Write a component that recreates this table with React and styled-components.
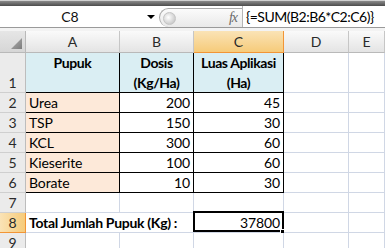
import React from "react";
import styled, { createGlobalStyle } from "styled-components";

const Global = createGlobalStyle`
  html, body {
    margin: 0;
    padding: 0;
    background: #fff;
  }
  body {
    font-family: Lato, "Open Sans", sans-serif;
    font-size: 14px;
    color: #000;
  }
  #root {
    width: 385px;
    height: 248px;
    overflow: hidden;
  }
`;

const Window = styled.div`
  width: 385px;
  height: 248px;
  overflow: hidden;
  display: flex;
  flex-direction: column;
`;

const TopStrip = styled.div`
  height: 6px;
  flex: none;
  background: linear-gradient(#d0d0d0 0, #d0d0d0 1px, #8a8a8a 1px, #4c4c4c 100%);
`;

const FormulaBar = styled.div`
  height: 21px;
  flex: none;
  display: flex;
  border-bottom: 1px solid #9a9a9a;
  background: #fff;
`;

const NameBox = styled.div`
  width: 159px;
  flex: none;
  display: flex;
  align-items: center;
  font-size: 14px;
  color: #111;
`;

const NameText = styled.span`
  width: 140px;
  text-align: center;
`;

const DropArrow = styled.span`
  width: 0;
  height: 0;
  margin-left: 7px;
  border-left: 4px solid transparent;
  border-right: 4px solid transparent;
  border-top: 4px solid #000;
`;

const FxArea = styled.div`
  width: 83px;
  flex: none;
  margin-top: 2px;
  display: flex;
  align-items: center;
  justify-content: space-between;
  padding: 0 5px 0 3px;
  box-sizing: border-box;
  border: 1px solid #a9a9a9;
  border-right: none;
  border-bottom: none;
  border-radius: 11px 0 0 11px;
  background: linear-gradient(#fbfbfb, #e9e9e9);
`;

const Knob = styled.span`
  width: 11px;
  height: 11px;
  border-radius: 50%;
  background: radial-gradient(circle at 40% 40%, #ffffff 0, #d8d8d8 55%, #b9b9b9 100%);
  border: 1px solid #c4c4c4;
`;

const Fx = styled.span`
  font-family: "Liberation Serif", "DejaVu Serif", serif;
  font-style: italic;
  font-size: 14px;
  color: #6a6a6a;
  letter-spacing: -1px;
`;

const FormulaInput = styled.div`
  flex: 1;
  display: flex;
  align-items: center;
  padding-left: 3px;
  border-left: 1px solid #b5b5b5;
  font-size: 14px;
  letter-spacing: -0.5px;
  white-space: nowrap;
`;

const Gap = styled.div`
  height: 3px;
  flex: none;
  background: #f3f3f3;
`;

const Sheet = styled.div`
  display: grid;
  grid-template-columns: 26px 94px 74px 90px 65px 1fr;
  grid-template-rows: 22px 40px repeat(8, 20px);
`;

const Corner = styled.div`
  background: linear-gradient(#e6e6e6, #d6d6d6);
  border-right: 1px solid #b9b9b9;
  border-bottom: 1px solid #b9b9b9;
  display: flex;
  align-items: flex-end;
  justify-content: flex-end;
  padding: 0 3px 3px 0;
`;

const ColHead = styled.div`
  background: ${p =>
    p.$active
      ? "linear-gradient(#fae3b6, #f6cb7a)"
      : "linear-gradient(#fafafa, #e4e4e4)"};
  border-right: 1px solid ${p => (p.$active ? "#f29536" : "#c6c6c6")};
  border-bottom: 1px solid ${p => (p.$active ? "#f29536" : "#b9b9b9")};
  display: flex;
  align-items: center;
  justify-content: center;
  font-size: 14px;
  color: #2a2a2a;
`;

const RowHead = styled.div`
  background: ${p => (p.$active ? "linear-gradient(90deg, #fae3b6, #f6cb7a)" : "#ebebeb")};
  border-right: 1px solid ${p => (p.$active ? "#f29536" : "#bdbdbd")};
  border-bottom: 1px solid ${p => (p.$active ? "#f29536" : "#cfcfcf")};
  display: flex;
  align-items: flex-end;
  justify-content: center;
  line-height: 19px;
  font-size: 14px;
  color: #2a2a2a;
`;

const Cell = styled.div`
  position: relative;
  grid-column: ${p => (p.$span ? `span ${p.$span}` : "auto")};
  background: ${p => p.$bg || "#fff"};
  border-right: 1px solid ${p => (p.$br ? "#000" : "#d0d7e5")};
  border-bottom: 1px solid ${p => (p.$bb ? "#000" : "#d0d7e5")};
  padding: 0 3px;
  font-weight: ${p => (p.$bold ? 700 : 400)};
  letter-spacing: ${p => (p.$bold ? "-0.3px" : "-0.1px")};
  text-align: ${p => p.$align || "left"};
  line-height: 19px;
  white-space: nowrap;
`;

const HeadCell = styled(Cell)`
  text-align: center;
  line-height: 20px;
  white-space: normal;
  font-weight: 700;
  letter-spacing: -0.4px;
`;

const Selection = styled.span`
  position: absolute;
  top: -2px;
  left: -1px;
  right: -1px;
  bottom: 0;
  border: 2px solid #000;
  pointer-events: none;
`;

const FillHandle = styled.span`
  position: absolute;
  right: -4px;
  bottom: -4px;
  width: 5px;
  height: 5px;
  background: #000;
  border: 1px solid #fff;
`;

const BLUE = "#daeef3";
const PEACH = "#fde9d9";

const data = [
  ["Urea", 200, 45],
  ["TSP", 150, 30],
  ["KCL", 300, 60],
  ["Kieserite", 100, 60],
  ["Borate", 10, 30],
];

const cols = ["A", "B", "C", "D", "E"];

const App = () => {
  return (
    <Window>
      <Global />
      <TopStrip />
      <FormulaBar>
        <NameBox>
          <NameText>C8</NameText>
          <DropArrow />
        </NameBox>
        <FxArea>
          <Knob />
          <Fx>fx</Fx>
        </FxArea>
        <FormulaInput>{"{=SUM(B2:B6*C2:C6)}"}</FormulaInput>
      </FormulaBar>
      <Gap />

      <Sheet>
        <Corner>
          <svg width="11" height="11" viewBox="0 0 11 11">
            <defs>
              <linearGradient id="tri" x1="0" y1="0" x2="1" y2="1">
                <stop offset="0" stopColor="#b0b0b0" />
                <stop offset="1" stopColor="#7c7c7c" />
              </linearGradient>
            </defs>
            <polygon points="11,0 11,11 0,11" fill="url(#tri)" />
          </svg>
        </Corner>
        {cols.map(c => (
          <ColHead key={c} $active={c === "C"}>{c}</ColHead>
        ))}

        <RowHead>1</RowHead>
        <HeadCell $bg={BLUE} $br $bb>Pupuk</HeadCell>
        <HeadCell $bg={BLUE} $br $bb>Dosis<br />(Kg/Ha)</HeadCell>
        <HeadCell $bg={BLUE} $br $bb>Luas Aplikasi<br />(Ha)</HeadCell>
        <Cell />
        <Cell />

        {data.map(([name, dosis, luas], i) => (
          <React.Fragment key={name}>
            <RowHead>{i + 2}</RowHead>
            <Cell $bg={PEACH} $br $bb>{name}</Cell>
            <Cell $align="right" $br $bb>{dosis}</Cell>
            <Cell $align="right" $br $bb>{luas}</Cell>
            <Cell />
            <Cell />
          </React.Fragment>
        ))}

        <RowHead>7</RowHead>
        <Cell /><Cell /><Cell /><Cell /><Cell />

        <RowHead $active>8</RowHead>
        <Cell $span={2} $bold>Total Jumlah Pupuk (Kg) :</Cell>
        <Cell $align="right">
          37800
          <Selection />
          <FillHandle />
        </Cell>
        <Cell /><Cell />

        <RowHead>9</RowHead>
        <Cell /><Cell /><Cell /><Cell /><Cell />
      </Sheet>
    </Window>
  );
};

export default App;
